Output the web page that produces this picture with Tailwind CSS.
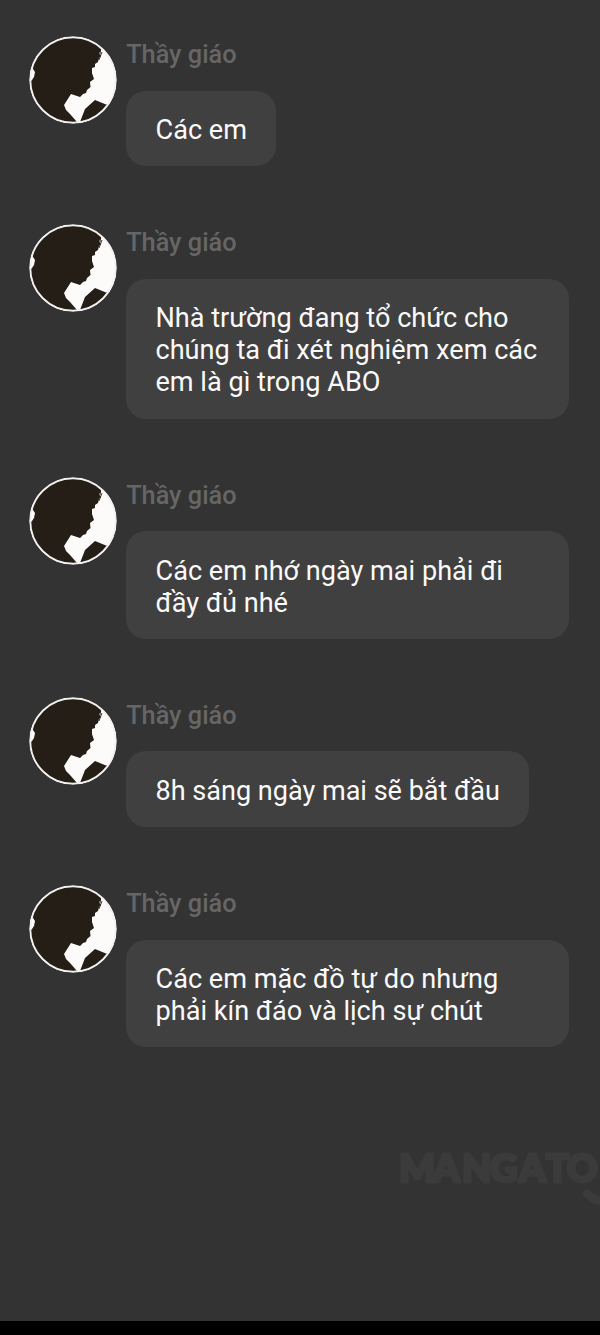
<!DOCTYPE html>
<html lang="vi">
<head>
<meta charset="utf-8">
<title>Chat</title>
<script src="https://cdn.jsdelivr.net/npm/@tailwindcss/browser@4"></script>
</head>
<body class="bg-[#333333] font-['Roboto',sans-serif]">
<svg class="absolute size-0">
  <symbol id="avatar" viewBox="0 0 88 88">
    <circle cx="44" cy="44" r="43" fill="#241e16"/>
    <path fill="#fdfafa" d="M71.5 11L72 15L70 17L72 20L70 22L69 26L66 28L66 31L63 32L63 37L65 43L61 46L61.5 51L58 54L57 57L54 58L51 61L42 58L35 69L37 74L41 78L48 86H51L56 73L66 64L77 68.5L79.400 68.600A43 43 0 0 0 71.500 11Z"/>
    <path fill="#fdfafa" d="M2 30L4 33L6 36L5 41L3 44L1 46Z"/>
    <path stroke="#241e16" stroke-width=".9" d="M72 11L71 18M73 16L70 24"/>
    <circle cx="44" cy="44" r="42.800" fill="none" stroke="#f3f1ef" stroke-width="2"/>
  </symbol>
</svg>
<div class="flex h-[1335px] w-[600px] flex-col overflow-hidden">
  <main class="flex flex-1 flex-col gap-[58px] pt-9 pl-[29px]">
    <section class="flex items-start gap-[9.2px]">
      <svg class="size-[88px] shrink-0 rounded-full"><use href="#avatar"/></svg>
      <div class="flex flex-col items-start">
        <h2 class="h-[54.6px] pt-[3px] text-[25.3px] leading-8 font-medium text-[#666666]">Thầy giáo</h2>
        <p class="rounded-[20px] bg-[#404040] px-[29.3px] pt-[23.6px] pb-[20.1px] text-[27.12px] leading-8 whitespace-nowrap text-[#fafafa]">Các em</p>
      </div>
    </section>
    <section class="flex items-start gap-[9.2px]">
      <svg class="size-[88px] shrink-0 rounded-full"><use href="#avatar"/></svg>
      <div class="flex flex-col items-start">
        <h2 class="h-[54.6px] pt-[3px] text-[25.3px] leading-8 font-medium text-[#666666]">Thầy giáo</h2>
        <p class="w-[442.8px] rounded-[20px] bg-[#404040] px-[29.3px] pt-[23.6px] pb-[20.1px] text-[27.12px] leading-8 whitespace-nowrap text-[#fafafa]">Nhà trường đang tổ chức cho<br>chúng ta đi xét nghiệm xem các<br>em là gì trong ABO</p>
      </div>
    </section>
    <section class="flex items-start gap-[9.2px]">
      <svg class="size-[88px] shrink-0 rounded-full"><use href="#avatar"/></svg>
      <div class="flex flex-col items-start">
        <h2 class="h-[54.6px] pt-[3px] text-[25.3px] leading-8 font-medium text-[#666666]">Thầy giáo</h2>
        <p class="w-[442.8px] rounded-[20px] bg-[#404040] px-[29.3px] pt-[23.6px] pb-[20.1px] text-[27.12px] leading-8 whitespace-nowrap text-[#fafafa]">Các em nhớ ngày mai phải đi<br>đầy đủ nhé</p>
      </div>
    </section>
    <section class="flex items-start gap-[9.2px]">
      <svg class="size-[88px] shrink-0 rounded-full"><use href="#avatar"/></svg>
      <div class="flex flex-col items-start">
        <h2 class="h-[54.6px] pt-[3px] text-[25.3px] leading-8 font-medium text-[#666666]">Thầy giáo</h2>
        <p class="rounded-[20px] bg-[#404040] px-[29.3px] pt-[23.6px] pb-[20.1px] text-[27.05px] leading-8 whitespace-nowrap text-[#fafafa]">8h sáng ngày mai sẽ bắt đầu</p>
      </div>
    </section>
    <section class="flex items-start gap-[9.2px]">
      <svg class="size-[88px] shrink-0 rounded-full"><use href="#avatar"/></svg>
      <div class="flex flex-col items-start">
        <h2 class="h-[54.6px] pt-[3px] text-[25.3px] leading-8 font-medium text-[#666666]">Thầy giáo</h2>
        <p class="w-[442.8px] rounded-[20px] bg-[#404040] px-[29.3px] pt-[23.6px] pb-[20.1px] text-[27.12px] leading-8 whitespace-nowrap text-[#fafafa]">Các em mặc đồ tự do nhưng<br>phải kín đáo và lịch sự chút</p>
      </div>
    </section>
    <svg class="mt-[38px] ml-auto h-[70px] w-[210px]" viewBox="390 1143 210 70" fill="#3b3b3b">
      <text x="399 433 462 490 519 546 567" y="1182" font-family="Lato, sans-serif" font-weight="900" font-size="38" stroke="#3b3b3b" stroke-width="3">MANGATO</text>
      <path d="M582 1194Q586 1187 590 1191Q595 1195 600 1196V1205Q589 1204 582 1194Z"/>
    </svg>
  </main>
  <footer class="h-[14px] bg-black"></footer>
</div>
</body>
</html>
